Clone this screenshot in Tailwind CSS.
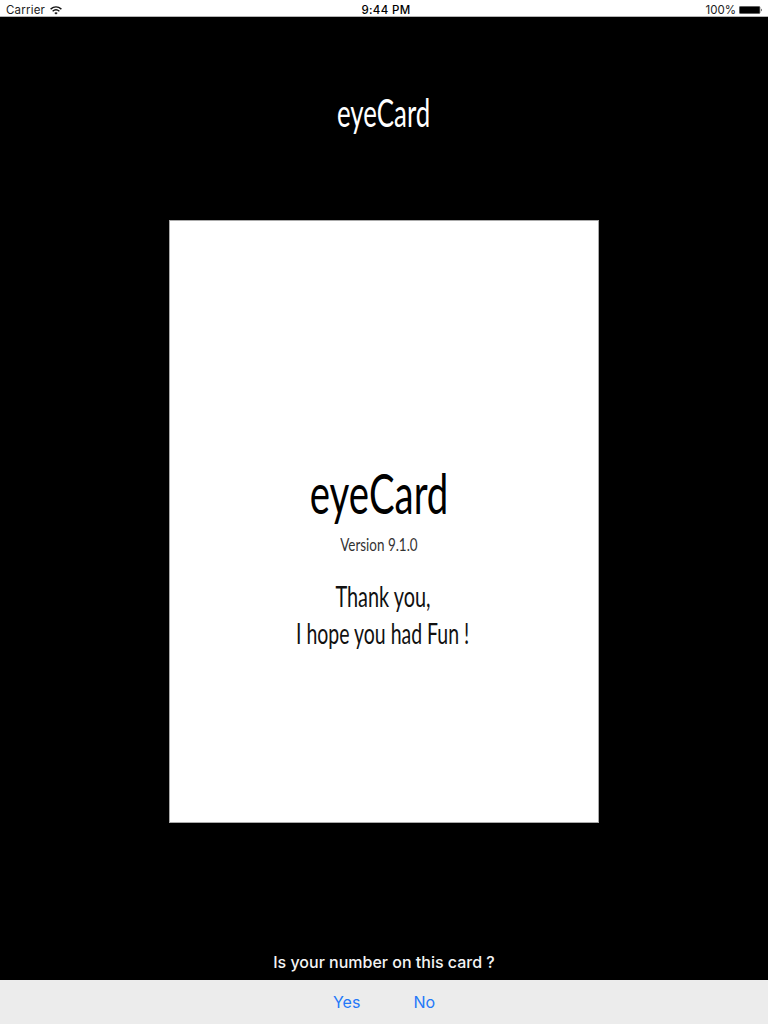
<!DOCTYPE html>
<html lang="en">
<head>
<meta charset="utf-8">
<title>eyeCard</title>
<script src="https://cdn.jsdelivr.net/npm/@tailwindcss/browser@4"></script>
</head>
<body class="flex h-screen flex-col overflow-hidden bg-black font-['Inter',sans-serif]">
  <header class="grid h-[17px] shrink-0 grid-cols-3 items-center border-b border-[#b5b5b5] bg-white pt-[5px] pr-[5px] pb-px pl-[6px] text-[11.5px] leading-[10px] text-[#222]">
    <div class="flex items-center gap-[5px]">
      <span class="tracking-[0.2px]">Carrier</span>
      <svg class="h-[9px] w-3" viewBox="0 0 12 9" fill="none" stroke="#111" stroke-width="1.4"><path d="M.6 3.1Q6-1.4 11.4 3.1M2.6 5.2Q6 2.4 9.4 5.2"/><path d="M4.3 6.9Q6 5.6 7.7 6.9L6 8.6Z" fill="#111" stroke="none"/></svg>
    </div>
    <span class="justify-self-center pl-[3px] font-medium tracking-[0.35px] text-black">9:44 PM</span>
    <div class="flex items-center justify-end gap-[3px]">
      <span>100%</span>
      <svg class="h-2 w-6" viewBox="0 0 24 8"><rect x=".4" y=".4" width="20.5" height="7.2" rx="1" fill="#000" stroke="#555" stroke-width=".8"/><path d="M22 2.5q1.5 1.5 0 3z" fill="#000"/></svg>
    </div>
  </header>

  <main class="flex min-h-0 flex-1 flex-col items-center font-['Lato',sans-serif]">
    <h1 class="mt-[69px] h-[52px] scale-x-[0.68] text-[38px] leading-[52px] whitespace-nowrap text-white">eyeCard</h1>

    <section class="mt-[82px] flex h-[603px] w-[430px] shrink-0 flex-col items-center border border-[#aaa] bg-white pr-[10px] text-black">
      <h2 class="mt-[240px] h-[64px] scale-x-[0.685] text-[56px] leading-[64px] whitespace-nowrap">eyeCard</h2>
      <p class="mt-[8px] h-6 scale-x-[0.79] text-[17px] leading-6 whitespace-nowrap text-[#333]">Version 9.1.0</p>
      <p class="mt-[21px] ml-[8px] h-[37px] scale-x-[0.71] text-[28px] leading-[37px] whitespace-nowrap text-[#111]">Thank you,</p>
      <p class="ml-[7px] h-[37px] scale-x-[0.695] text-[28px] leading-[37px] whitespace-nowrap text-[#111]">I hope you had Fun !</p>
    </section>

    <p class="mt-auto mb-[6px] font-['Inter',sans-serif] text-[16px] leading-6 font-medium whitespace-nowrap text-[#f4f4f4]">Is your number on this card ?</p>
  </main>

  <footer class="flex h-11 shrink-0 items-center justify-center gap-[53px] bg-[#ececec] text-[16px] text-[#2478f8]">
    <button>Yes</button>
    <button>No</button>
  </footer>
</body>
</html>
